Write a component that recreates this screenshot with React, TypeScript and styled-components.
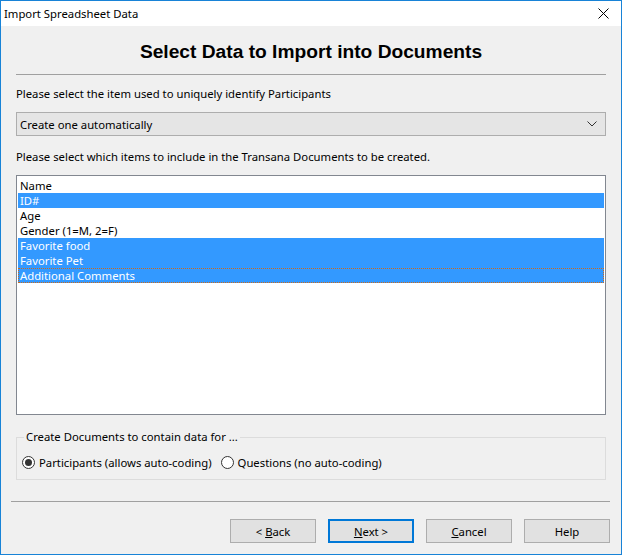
import React from "react";
import styled, { createGlobalStyle } from "styled-components";

const Global = createGlobalStyle`
  html, body { margin: 0; padding: 0; background: #ffffff; }
  #root { width: 622px; height: 555px; }
  * { box-sizing: border-box; }
`;

const UI_FONT = `"Noto Sans", "DejaVu Sans", sans-serif`;

const Window = styled.div`
  width: 622px;
  height: 555px;
  border: 1px solid #1883d7;
  display: flex;
  flex-direction: column;
  background: #f0f0f0;
  font-family: ${UI_FONT};
  font-size: 11.3px;
  color: #000;
`;

const TitleBar = styled.div`
  height: 25px;
  flex: none;
  background: #ffffff;
  display: flex;
  align-items: center;
  justify-content: space-between;
  padding: 0 0 0 3px;
`;

const TitleText = styled.span`
  font-size: 11.3px;
  line-height: 16px;
`;

const CloseButton = styled.div`
  width: 46px;
  height: 25px;
  display: flex;
  align-items: center;
  justify-content: center;
  padding-left: 10px;
`;

const Body = styled.div`
  flex: 1;
  display: flex;
  flex-direction: column;
  padding: 0 15px;
`;

const Heading = styled.h1`
  margin: 14px 0 0;
  font-family: "Liberation Sans", Arial, sans-serif;
  font-weight: bold;
  font-size: 19.2px;
  line-height: 24px;
  text-align: center;
`;

const Rule = styled.div<{ $top: number }>`
  height: 1px;
  background: #a0a0a0;
  margin-top: ${(p) => p.$top}px;
`;

const Label = styled.div<{ $top: number }>`
  margin-top: ${(p) => p.$top}px;
  line-height: 16px;
`;

const Dropdown = styled.div`
  margin-top: 10px;
  height: 24px;
  border: 1px solid #adadad;
  background: #e5e5e5;
  display: flex;
  align-items: center;
  justify-content: space-between;
  padding: 0 8px 0 3px;
`;

const ListBox = styled.div`
  margin-top: 10px;
  height: 240px;
  border: 1px solid #828790;
  background: #ffffff;
  padding: 2px 1px;
  display: flex;
  flex-direction: column;
`;

const ListItem = styled.div<{ $selected: boolean; $focused: boolean }>`
  height: 15px;
  line-height: 15px;
  padding-left: 2px;
  background: ${(p) => (p.$selected ? "#3399ff" : "transparent")};
  color: ${(p) => (p.$selected ? "#ffffff" : "#000000")};
  outline: ${(p) => (p.$focused ? "1px dotted #cc6a1a" : "none")};
  outline-offset: -1px;
  white-space: nowrap;
`;

const GroupBox = styled.div`
  position: relative;
  margin-top: 22px;
  height: 43px;
  border: 1px solid #dcdcdc;
  display: flex;
  align-items: center;
  padding: 8px 0 0 5px;
  gap: 9px;
`;

const GroupLegend = styled.span`
  position: absolute;
  top: -9px;
  left: 7px;
  padding: 0 2px;
  background: #f0f0f0;
  line-height: 16px;
`;

const RadioLabel = styled.label`
  display: flex;
  align-items: center;
  gap: 4px;
  line-height: 16px;
  white-space: nowrap;
`;

const RadioCircle = styled.span<{ $checked: boolean }>`
  width: 13px;
  height: 13px;
  border-radius: 50%;
  border: 1px solid #333333;
  background: #ffffff;
  display: flex;
  align-items: center;
  justify-content: center;
  &::after {
    content: "";
    width: 7px;
    height: 7px;
    border-radius: 50%;
    background: ${(p) => (p.$checked ? "#333333" : "transparent")};
  }
`;

const Footer = styled.div`
  margin: 21px -4px 0 -5px;
  display: flex;
  flex-direction: column;
`;

const ButtonRow = styled.div`
  margin-top: 17px;
  display: flex;
  justify-content: flex-end;
  gap: 12px;
`;

const Button = styled.button<{ $default?: boolean }>`
  width: 86px;
  height: 24px;
  font-family: ${UI_FONT};
  font-size: 11.3px;
  color: #000;
  background: #e1e1e1;
  border: ${(p) => (p.$default ? "2px solid #0078d7" : "1px solid #adadad")};
  padding: 0;
  display: flex;
  align-items: center;
  justify-content: center;
  u { text-decoration: underline; }
`;

const items = [
  { name: "Name", selected: false },
  { name: "ID#", selected: true },
  { name: "Age", selected: false },
  { name: "Gender (1=M, 2=F)", selected: false },
  { name: "Favorite food", selected: true },
  { name: "Favorite Pet", selected: true },
  { name: "Additional Comments", selected: true, focused: true },
];

export default function App() {
  return (
    <>
      <Global />
      <Window>
        <TitleBar>
          <TitleText>Import Spreadsheet Data</TitleText>
          <CloseButton>
            <svg width="11" height="11" viewBox="0 0 11 11">
              <path d="M0.5 0.5 L10.5 10.5 M10.5 0.5 L0.5 10.5" stroke="#000" strokeWidth="1" />
            </svg>
          </CloseButton>
        </TitleBar>
        <Body>
          <Heading>Select Data to Import into Documents</Heading>
          <Rule $top={10} />
          <Label $top={11}>Please select the item used to uniquely identify Participants</Label>
          <Dropdown>
            <span>Create one automatically</span>
            <svg width="10" height="6" viewBox="0 0 10 6">
              <path d="M0.5 0.5 L5 5 L9.5 0.5" stroke="#333" fill="none" strokeWidth="1" />
            </svg>
          </Dropdown>
          <Label $top={13}>Please select which items to include in the Transana Documents to be created.</Label>
          <ListBox>
            {items.map((it) => (
              <ListItem key={it.name} $selected={it.selected} $focused={!!it.focused}>
                {it.name}
              </ListItem>
            ))}
          </ListBox>
          <GroupBox>
            <GroupLegend>Create Documents to contain data for ...</GroupLegend>
            <RadioLabel>
              <RadioCircle $checked={true} />
              Participants (allows auto-coding)
            </RadioLabel>
            <RadioLabel>
              <RadioCircle $checked={false} />
              Questions (no auto-coding)
            </RadioLabel>
          </GroupBox>
          <Footer>
            <Rule $top={0} />
            <ButtonRow>
              <Button>&lt;&nbsp;<u>B</u>ack</Button>
              <Button $default><u>N</u>ext &gt;</Button>
              <Button><u>C</u>ancel</Button>
              <Button>Help</Button>
            </ButtonRow>
          </Footer>
        </Body>
      </Window>
    </>
  );
}
